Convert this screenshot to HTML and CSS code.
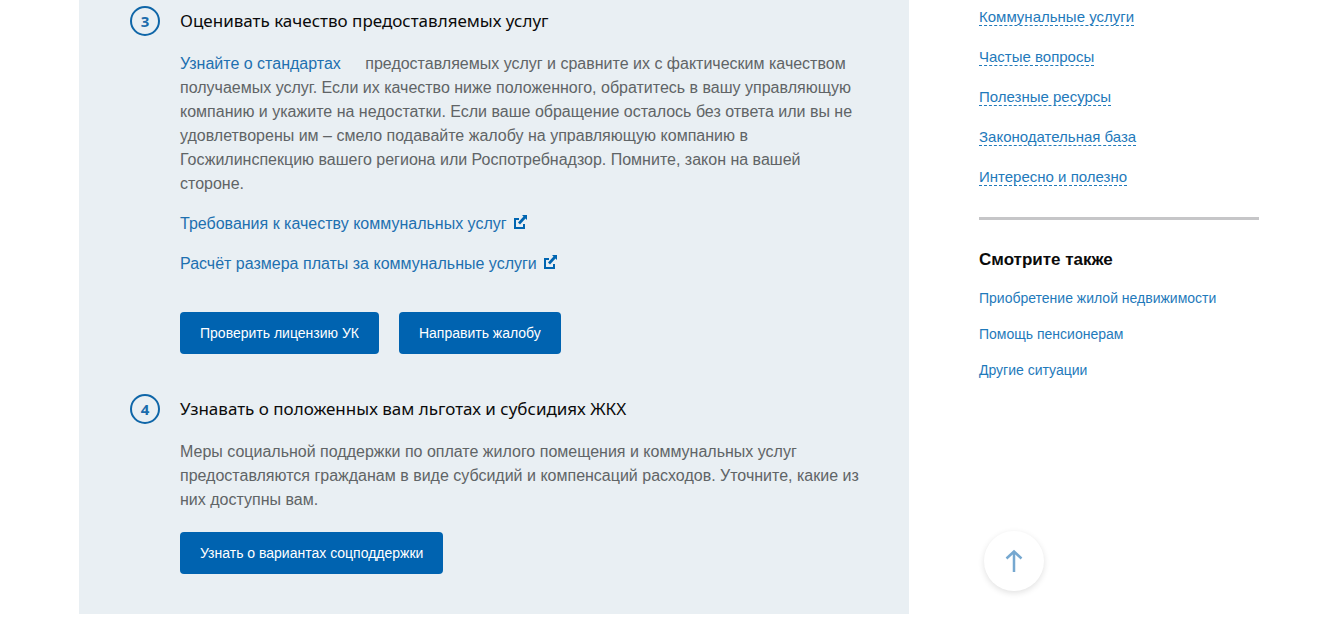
FILE: index.html
```html
<!DOCTYPE html>
<html lang="ru">
<head>
    <meta charset="UTF-8">
    <meta name="viewport" content="width=device-width, initial-scale=1.0">
    <title>Коммунальные услуги</title>
    <link rel="stylesheet" href="styles.css">
</head>
<body>
    <div class="page">
        <main class="content">
            <section class="step">
                <span class="step-number">3</span>
                <div class="step-body">
                    <h2>Оценивать качество предоставляемых услуг</h2>
                    <p><a href="#" class="standards">Узнайте о стандартах</a> предоставляемых услуг и сравните их с фактическим качеством получаемых услуг. Если их качество ниже положенного, обратитесь в вашу управляющую компанию и укажите на недостатки. Если ваше обращение осталось без ответа или вы не удовлетворены им – смело подавайте жалобу на управляющую компанию в Госжилинспекцию вашего региона или Роспотребнадзор. Помните, закон на вашей стороне.</p>
                    <p>
                        <a href="#">Требования к качеству коммунальных услуг
                            <svg class="external" viewBox="0 0 14 14" aria-hidden="true">
                                <path d="M5 4H1v9h9V9" fill="none" stroke="currentColor" stroke-width="2"/>
                                <path d="M8 0h5v5l-1.500-1.500-5.500 6-2-2 5.500-6z" fill="currentColor"/>
                            </svg>
                        </a>
                    </p>
                    <p>
                        <a href="#">Расчёт размера платы за коммунальные услуги
                            <svg class="external" viewBox="0 0 14 14" aria-hidden="true">
                                <path d="M5 4H1v9h9V9" fill="none" stroke="currentColor" stroke-width="2"/>
                                <path d="M8 0h5v5l-1.500-1.500-5.500 6-2-2 5.500-6z" fill="currentColor"/>
                            </svg>
                        </a>
                    </p>
                    <div class="buttons buttons-spaced">
                        <button type="button">Проверить лицензию УК</button>
                        <button type="button">Направить жалобу</button>
                    </div>
                </div>
            </section>

            <section class="step">
                <span class="step-number">4</span>
                <div class="step-body">
                    <h2>Узнавать о положенных вам льготах и субсидиях ЖКХ</h2>
                    <p>Меры социальной поддержки по оплате жилого помещения и коммунальных услуг предоставляются гражданам в виде субсидий и компенсаций расходов. Уточните, какие из них доступны вам.</p>
                    <div class="buttons">
                        <button type="button">Узнать о вариантах соцподдержки</button>
                    </div>
                </div>
            </section>
        </main>

        <aside class="sidebar">
            <ul class="sections">
                <li><a href="#">Коммунальные услуги</a></li>
                <li><a href="#">Частые вопросы</a></li>
                <li><a href="#">Полезные ресурсы</a></li>
                <li><a href="#">Законодательная база</a></li>
                <li><a href="#">Интересно и полезно</a></li>
            </ul>
            <h3>Смотрите также</h3>
            <ul class="related">
                <li><a href="#">Приобретение жилой недвижимости</a></li>
                <li><a href="#">Помощь пенсионерам</a></li>
                <li><a href="#">Другие ситуации</a></li>
            </ul>
        </aside>
    </div>

    <!-- Scroll to top -->
    <button type="button" class="to-top" aria-label="Наверх">
        <svg viewBox="0 0 18 24" aria-hidden="true">
            <path d="M9 23V3M1.500 9.500L9 2.500l7.500 7" fill="none" stroke="currentColor" stroke-width="2.500"/>
        </svg>
    </button>
</body>
</html>
```

FILE: styles.css
```css
* {
    margin: 0;
    padding: 0;
    box-sizing: border-box;
}

body {
    font-family: "Liberation Sans", Arial, sans-serif;
    font-size: 16px;
    line-height: 24px;
    color: #606466;
    background-color: #fff;
}

a {
    color: #1d70b0;
    text-decoration: none;
}

a:hover {
    color: #0d4cd3;
}

ul {
    list-style: none;
}

.page {
    display: flex;
    align-items: flex-start;
    gap: 70px;
    padding: 0 70px 0 79px;
}

/* Steps */
.content {
    flex: 1;
    min-width: 0;
    padding: 6px 49px 40px 51px;
    background-color: #e9eff3;
}

.step {
    display: flex;
    gap: 20px;
}

.step + .step {
    margin-top: 40px;
}

.step-number {
    display: flex;
    align-items: center;
    justify-content: center;
    flex: none;
    width: 30px;
    height: 30px;
    border: 2px solid #0f66a8;
    border-radius: 50%;
    font-family: "Open Sans", sans-serif;
    font-size: 15px;
    font-weight: bold;
    color: #1b6cac;
}

.step-body {
    flex: 1;
    min-width: 0;
}

.step-body h2 {
    margin-bottom: 16px;
    font-family: "Noto Sans", sans-serif;
    font-size: 17px;
    font-weight: normal;
    line-height: 30px;
    color: #0b0b0b;
}

.step-body p + p {
    margin-top: 16px;
}

.standards {
    margin-right: 20px;
}

.external {
    width: 14px;
    height: 14px;
    margin-left: 3px;
    color: #0065b1;
}

.buttons {
    display: flex;
    flex-wrap: wrap;
    gap: 20px;
    margin-top: 20px;
}

.buttons-spaced {
    margin-top: 36px;
}

.buttons button {
    height: 42px;
    padding: 0 20px;
    border: none;
    border-radius: 4px;
    background-color: #0063b0;
    font-family: inherit;
    font-size: 14px;
    color: #fff;
    cursor: pointer;
}

.buttons button:hover {
    background-color: #0d4cd3;
}

/* Sidebar */
.sidebar {
    flex: none;
    width: 280px;
    padding-top: 5px;
}

.sections {
    padding-bottom: 28px;
    border-bottom: 3px solid #c6c6c8;
    font-size: 15px;
}

.sections li + li {
    margin-top: 16px;
}

.sections a {
    border-bottom: 1px dashed #1f7abb;
}

.sidebar h3 {
    margin: 28px 0 14px;
    font-size: 17px;
    color: #0b0b0b;
}

.related {
    font-size: 14px;
}

.related li + li {
    margin-top: 12px;
}

.sidebar a {
    color: #1f7abb;
}

.to-top {
    position: fixed;
    right: 285px;
    bottom: 41px;
    display: flex;
    align-items: center;
    justify-content: center;
    width: 60px;
    height: 60px;
    border: none;
    border-radius: 50%;
    background-color: #fff;
    box-shadow: 0 2px 6px rgba(0, 0, 0, 0.12);
    color: #76a8d0;
    cursor: pointer;
}

.to-top svg {
    width: 18px;
    height: 24px;
}
```
